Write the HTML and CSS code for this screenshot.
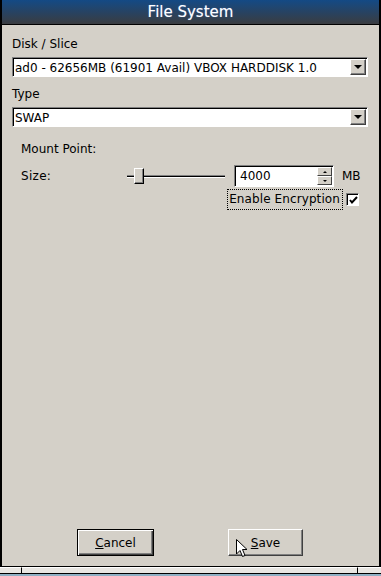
FILE: index.html
```html
<!DOCTYPE html>
<html lang="en">
<head>
  <meta charset="UTF-8" />
  <meta name="viewport" content="width=device-width, initial-scale=1.0" />
  <title>File System</title>
  <link rel="stylesheet" href="styles.css">
</head>
<body>
  <div class="window">
    <div class="titlebar">File System</div>

    <div class="content">
      <div class="label">Disk / Slice</div>
      <div class="combo">
        <span class="combo-text">ad0 - 62656MB (61901 Avail) VBOX HARDDISK 1.0</span>
        <span class="arrow-btn"><span class="tri"></span></span>
      </div>

      <div class="label">Type</div>
      <div class="combo">
        <span class="combo-text">SWAP</span>
        <span class="arrow-btn"><span class="tri"></span></span>
      </div>

      <div class="group">
        <div class="row mount">Mount Point:</div>
        <div class="row size-row">
          <span class="size-label">Size:</span>
          <div class="slider">
            <div class="groove"></div>
            <div class="handle"></div>
          </div>
          <div class="spin">
            <span class="spin-text">4000</span>
            <span class="spin-btns">
              <span class="spin-btn"><span class="tri-up"></span></span>
              <span class="spin-btn"><span class="tri-down"></span></span>
            </span>
          </div>
          <span class="unit">MB</span>
        </div>
        <div class="row enc-row">
          <span class="enc-label">Enable Encryption</span>
          <span class="check">
            <svg width="9" height="9" viewBox="0 0 9 9"><path d="M1 4 L3 6.5 L8 1" fill="none" stroke="#000" stroke-width="2"/></svg>
          </span>
        </div>
      </div>

      <div class="buttons">
        <button class="btn default"><u>C</u>ancel</button>
        <button class="btn"><u>S</u>ave</button>
        <svg class="cursor" width="12" height="19" viewBox="0 0 12 19">
          <path d="M0.5 0.5 L0.5 15 L4 11.5 L6.5 17.5 L9 16.5 L6.5 10.5 L11 10.5 Z" fill="#fff" stroke="#000" stroke-width="1"/>
        </svg>
      </div>
    </div>

    <div class="statusbar">
      <span class="cell first"></span>
      <span class="cell wide"></span>
      <span class="cell last"></span>
    </div>
    <div class="taskbar"></div>
  </div>
</body>
</html>
```

FILE: styles.css
```css
* {
  box-sizing: border-box;
}

body {
  margin: 0;
  background: #d4d0c8;
  font-family: 'DejaVu Sans', Verdana, sans-serif;
  font-size: 12px;
  color: #000;
}

.window {
  width: 381px;
  height: 576px;
  display: flex;
  flex-direction: column;
  background: #d4d0c8;
  border-left: 2px solid #000;
  border-right: 2px solid #000;
}

.titlebar {
  height: 25px;
  flex: none;
  background: linear-gradient(to bottom, #144a85, #3a3c40);
  border-bottom: 1px solid #000;
  color: #fff;
  font-size: 15px;
  text-align: center;
  line-height: 24px;
  text-shadow: 0 0 1px rgba(160, 190, 255, 0.6);
}

.content {
  flex: 1;
  display: flex;
  flex-direction: column;
  padding: 11px 12px 0 10px;
}

.label {
  height: 16px;
  line-height: 16px;
  margin-bottom: 5px;
}

.combo {
  height: 20px;
  width: 356px;
  display: flex;
  align-items: center;
  background: #fff;
  border-top: 1px solid #808080;
  border-left: 1px solid #808080;
  border-right: 1px solid #fff;
  border-bottom: 1px solid #fff;
  box-shadow: inset 1px 1px 0 #000;
  margin-bottom: 9px;
  padding-left: 2px;
}

.combo-text {
  flex: 1;
  padding-top: 1px;
  white-space: nowrap;
  overflow: hidden;
}

.arrow-btn {
  width: 16px;
  height: 16px;
  margin-right: 1px;
  background: #d4d0c8;
  border-top: 1px solid #fff;
  border-left: 1px solid #fff;
  border-right: 1px solid #404040;
  border-bottom: 1px solid #404040;
  box-shadow: inset -1px -1px 0 #808080;
  display: flex;
  align-items: center;
  justify-content: center;
}

.tri {
  width: 0;
  height: 0;
  border-left: 4px solid transparent;
  border-right: 4px solid transparent;
  border-top: 4px solid #000;
}

.group {
  padding-left: 9px;
  padding-top: 5px;
}

.row {
  display: flex;
  align-items: center;
}

.mount {
  height: 16px;
  margin-bottom: 8px;
}

.size-row {
  height: 22px;
}

.size-label {
  width: 106px;
  letter-spacing: 0.3px;
}

.slider {
  position: relative;
  width: 98px;
  height: 16px;
  margin-right: 9px;
}

.groove {
  position: absolute;
  left: 0;
  right: 0;
  top: 7px;
  height: 3px;
  border-top: 1px solid #808080;
  border-bottom: 1px solid #fff;
  background: #000;
}

.handle {
  position: absolute;
  left: 7px;
  top: 0;
  width: 10px;
  height: 16px;
  background: #d4d0c8;
  border-top: 1px solid #fff;
  border-left: 1px solid #fff;
  border-right: 1px solid #000;
  border-bottom: 1px solid #000;
  box-shadow: inset -1px -1px 0 #808080;
}

.spin {
  width: 100px;
  height: 22px;
  display: flex;
  align-items: center;
  background: #fff;
  border-top: 1px solid #808080;
  border-left: 1px solid #808080;
  border-right: 1px solid #fff;
  border-bottom: 1px solid #fff;
  box-shadow: inset 1px 1px 0 #000;
  padding-left: 5px;
  margin-right: 8px;
}

.spin-text {
  flex: 1;
}

.spin-btns {
  display: flex;
  flex-direction: column;
  margin-right: 1px;
}

.spin-btn {
  width: 15px;
  height: 9px;
  background: #d4d0c8;
  border-top: 1px solid #fff;
  border-left: 1px solid #fff;
  border-right: 1px solid #404040;
  border-bottom: 1px solid #404040;
  display: flex;
  align-items: center;
  justify-content: center;
}

.tri-up {
  border-left: 2px solid transparent;
  border-right: 2px solid transparent;
  border-bottom: 2px solid #000;
}

.tri-down {
  border-left: 2px solid transparent;
  border-right: 2px solid transparent;
  border-top: 2px solid #000;
}

.unit {
  width: 20px;
}

.enc-row {
  justify-content: flex-end;
  padding-right: 8px;
  margin-top: 2px;
}

.enc-label {
  border: 1px dotted #000;
  height: 21px;
  line-height: 19px;
  padding: 0 2px 0 1px;
  margin-right: 3px;
  letter-spacing: 0.1px;
}

.check {
  width: 13px;
  height: 13px;
  background: #fff;
  border-top: 1px solid #808080;
  border-left: 1px solid #808080;
  border-right: 1px solid #fff;
  border-bottom: 1px solid #fff;
  box-shadow: inset 1px 1px 0 #000;
  display: flex;
  align-items: center;
  justify-content: center;
  padding: 1px 0 0 1px;
}

.check svg {
  display: block;
}

.buttons {
  margin-top: auto;
  margin-bottom: 10px;
  display: flex;
  position: relative;
  padding-left: 65px;
  gap: 74px;
}

.btn {
  width: 75px;
  height: 27px;
  font-family: 'DejaVu Sans', Verdana, sans-serif;
  font-size: 12px;
  color: #000;
  background: #d4d0c8;
  border-top: 1px solid #fff;
  border-left: 1px solid #fff;
  border-right: 1px solid #404040;
  border-bottom: 1px solid #404040;
  box-shadow: inset -1px -1px 0 #808080;
  padding: 0;
}

.btn.default {
  width: 77px;
  border: 1px solid #000;
  box-shadow: inset 1px 1px 0 #fff, inset -1px -1px 0 #404040, inset -2px -2px 0 #808080;
}

.btn u {
  text-decoration: underline;
}

.cursor {
  position: absolute;
  left: 224px;
  top: 10px;
}

.statusbar {
  flex: none;
  height: 8px;
  display: flex;
  border-top: 1px solid #000;
  border-bottom: 1px solid #000;
  background: #e8e6e2;
  margin-left: -2px;
  margin-right: -2px;
}

.cell {
  height: 100%;
  border-right: 1px solid #000;
  border-top: 1px solid #fff;
}

.first {
  width: 22px;
}

.wide {
  width: 336px;
}

.last {
  flex: 1;
  border-right: none;
}

.taskbar {
  flex: none;
  height: 2px;
  background: #8fb0c4;
  margin-left: -2px;
  margin-right: -2px;
}
```
